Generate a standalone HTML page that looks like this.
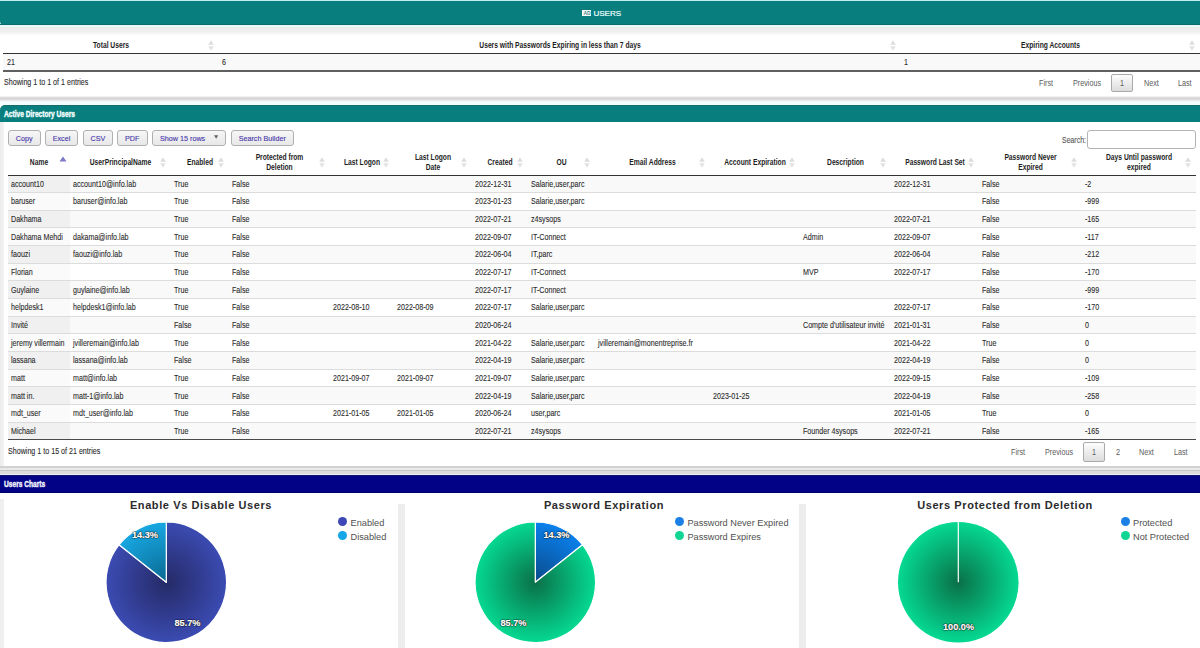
<!DOCTYPE html>
<html><head><meta charset="utf-8"><style>
*{box-sizing:border-box;margin:0;padding:0}
html,body{width:1200px;height:648px;overflow:hidden;background:#fff;font-family:"Liberation Sans",sans-serif;color:#333}
.a{position:absolute}
.t{position:absolute;white-space:nowrap;font-size:8.8px;line-height:10px;color:#2b2b2b;transform-origin:0 50%;transform:scaleX(0.81);-webkit-text-stroke:0.1px #2b2b2b}
.h{position:absolute;white-space:nowrap;font-size:9px;line-height:10px;font-weight:bold;color:#1e1e1e;text-align:center;transform-origin:50% 50%;transform:scaleX(0.745)}
.ic{position:absolute}
.btn{position:absolute;height:16px;border:1px solid #b0b0b0;border-radius:3px;background:linear-gradient(#f6f6f6,#e8e8e8)}
.bt{position:absolute;white-space:nowrap;font-size:8px;line-height:10px;color:#4536aa;-webkit-text-stroke:0.12px #4536aa;transform-origin:50% 50%;transform:scaleX(0.9)}
.pg{position:absolute;white-space:nowrap;font-size:9px;line-height:10px;color:#5a5a5a;transform-origin:0 50%;transform:scaleX(0.8)}
.ct{position:absolute;white-space:nowrap;font-size:11px;line-height:14px;font-weight:bold;color:#2b2b2b;text-align:center;letter-spacing:0.6px}
.lg{position:absolute;white-space:nowrap;font-size:9.2px;line-height:11px;color:#505050}
.dot{position:absolute;width:9px;height:9px;border-radius:50%}
.pl{position:absolute;white-space:nowrap;font-size:9.2px;line-height:11px;font-weight:bold;color:#fff;-webkit-text-stroke:0.2px #fff;text-shadow:0 0 1px #000,0 0 1.5px #000,0 0 1px #000;text-align:center}
</style></head><body>

<div class="a" style="left:0;top:0;width:1200px;height:1px;background:#bfeeee"></div>
<div class="a" style="left:0;top:1px;width:1200px;height:24px;background:#087f7e;border-radius:0 0 0 4px"></div>
<div class="a" style="left:0;top:23.8px;width:1200px;height:1.2px;background:#0b6b6b"></div>
<div class="a" style="left:0;top:25px;width:1200px;height:2px;background:#e6fbf9"></div>
<div class="a" style="left:582px;top:10px;width:9px;height:6px;background:#f4fbfb"></div>
<div class="a" style="left:583.5px;top:10.2px;font-size:5px;line-height:6px;color:#4a8f8f;font-weight:bold;white-space:nowrap">AD</div>
<div class="a" style="left:593.5px;top:8.7px;font-size:8px;line-height:10px;color:#f0ffff;-webkit-text-stroke:0.2px #f0ffff;white-space:nowrap">USERS</div>
<div class="a" style="left:0;top:27px;width:1200px;height:8px;background:linear-gradient(#eceeeb,#efeff1 55%,#fcfcfd)"></div>
<div class="h" style="left:3px;width:216px;top:40px">Total Users</div>
<svg class="ic" style="left:208.0px;top:39.5px" width="6" height="11" viewBox="0 0 6 11"><path d="M3 0.3 L5.8 4.8 L0.2 4.8Z" fill="#dcdcdc"/><path d="M3 10.7 L5.8 6.2 L0.2 6.2Z" fill="#e2e2e2"/></svg>
<div class="h" style="left:219px;width:682px;top:40px">Users with Passwords Expiring in less than 7 days</div>
<svg class="ic" style="left:890.0px;top:39.5px" width="6" height="11" viewBox="0 0 6 11"><path d="M3 0.3 L5.8 4.8 L0.2 4.8Z" fill="#dcdcdc"/><path d="M3 10.7 L5.8 6.2 L0.2 6.2Z" fill="#e2e2e2"/></svg>
<div class="h" style="left:901px;width:299px;top:40px">Expiring Accounts</div>
<svg class="ic" style="left:1189.0px;top:39.5px" width="6" height="11" viewBox="0 0 6 11"><path d="M3 0.3 L5.8 4.8 L0.2 4.8Z" fill="#dcdcdc"/><path d="M3 10.7 L5.8 6.2 L0.2 6.2Z" fill="#e2e2e2"/></svg>
<div class="a" style="left:3px;top:53px;width:1197px;height:1px;background:#333"></div>
<div class="a" style="left:3px;top:54px;width:1197px;height:16.5px;background:#f9f9f9"></div>
<div class="t" style="left:6.5px;top:57.4px">21</div>
<div class="t" style="left:221.5px;top:57.4px">6</div>
<div class="t" style="left:903.5px;top:57.4px">1</div>
<div class="a" style="left:3px;top:70.2px;width:1197px;height:1.6px;background:#5f5f5f"></div>
<div class="t" style="left:3.5px;top:77.4px">Showing 1 to 1 of 1 entries</div>
<div class="pg" style="left:1039.2px;top:78.2px">First</div>
<div class="pg" style="left:1073.2px;top:78.2px">Previous</div>
<div class="btn" style="left:1111px;top:73.6px;width:21.6px;height:18.8px;border-color:#aaa;border-radius:2px;background:linear-gradient(#fdfdfd,#dcdcdc)"></div>
<div class="pg" style="left:1120.2px;top:78.2px">1</div>
<div class="pg" style="left:1143.7px;top:78.2px">Next</div>
<div class="pg" style="left:1178.2px;top:78.2px">Last</div>
<div class="a" style="left:0;top:96px;width:1200px;height:5.5px;background:linear-gradient(#fafafa,#d3d3d3 35%,#dadada 55%,#fdfdfd)"></div>
<div class="a" style="left:0;top:101.5px;width:1200px;height:3.3px;background:#f2fcfc"></div>
<div class="a" style="left:0;top:104.8px;width:1200px;height:17.7px;background:#087f7e;border-top:1px solid #176d6d;border-radius:5px 0 0 0"></div>
<div class="a" style="left:4px;top:108.8px;font-size:9px;line-height:10px;font-weight:bold;color:#f4ffff;-webkit-text-stroke:0.4px #f4ffff;white-space:nowrap;transform-origin:0 50%;transform:scaleX(0.735)">Active Directory Users</div>
<div class="a" style="left:0;top:122px;width:3.5px;height:344px;background:linear-gradient(90deg,#ececec,#f4f4f4)"></div>
<div class="btn" style="left:8px;top:130.2px;width:32.5px;height:16.3px"></div>
<div class="bt" style="left:8px;width:32.5px;text-align:center;top:133.8px">Copy</div>
<div class="btn" style="left:45px;top:130.2px;width:33px;height:16.3px"></div>
<div class="bt" style="left:45px;width:33px;text-align:center;top:133.8px">Excel</div>
<div class="btn" style="left:83px;top:130.2px;width:30px;height:16.3px"></div>
<div class="bt" style="left:83px;width:30px;text-align:center;top:133.8px">CSV</div>
<div class="btn" style="left:117px;top:130.2px;width:30.5px;height:16.3px"></div>
<div class="bt" style="left:117px;width:30.5px;text-align:center;top:133.8px">PDF</div>
<div class="btn" style="left:152.3px;top:130.2px;width:74.1px;height:16.3px"></div>
<div class="bt" style="left:159.7px;top:133.8px;transform-origin:0 50%">Show 15 rows</div>
<svg class="ic" style="left:213.7px;top:134.8px" width="4.4" height="4" viewBox="0 0 4.4 4"><path d="M0 0.2 L4.4 0.2 L2.2 3.8Z" fill="#666"/></svg>
<div class="btn" style="left:231px;top:130.2px;width:62.5px;height:16.3px"></div>
<div class="bt" style="left:231px;width:62.5px;text-align:center;top:133.8px">Search Builder</div>
<div class="t" style="left:1061.5px;top:135.1px;color:#555;-webkit-text-stroke:0.1px #555;transform:scaleX(0.79)">Search:</div>
<div class="a" style="left:1087.3px;top:130.2px;width:108.5px;height:18.4px;border:1px solid #b4b4b4;border-radius:3px;background:#fff"></div>
<div class="h" style="left:8px;width:62px;top:157px">Name</div>
<svg class="ic" style="left:58.5px;top:155.5px" width="8" height="6" viewBox="0 0 8 6"><path d="M4 0.5 L7.5 5.5 L0.5 5.5Z" fill="#7d78c8"/></svg>
<div class="h" style="left:70px;width:101px;top:157px">UserPrincipalName</div>
<svg class="ic" style="left:160.0px;top:156.5px" width="6" height="11" viewBox="0 0 6 11"><path d="M3 0.3 L5.8 4.8 L0.2 4.8Z" fill="#dcdcdc"/><path d="M3 10.7 L5.8 6.2 L0.2 6.2Z" fill="#e2e2e2"/></svg>
<div class="h" style="left:171px;width:58px;top:157px">Enabled</div>
<svg class="ic" style="left:218.0px;top:156.5px" width="6" height="11" viewBox="0 0 6 11"><path d="M3 0.3 L5.8 4.8 L0.2 4.8Z" fill="#dcdcdc"/><path d="M3 10.7 L5.8 6.2 L0.2 6.2Z" fill="#e2e2e2"/></svg>
<div class="h" style="left:229px;width:101px;top:151.8px">Protected from</div>
<div class="h" style="left:229px;width:101px;top:161.8px">Deletion</div>
<svg class="ic" style="left:319.0px;top:156.5px" width="6" height="11" viewBox="0 0 6 11"><path d="M3 0.3 L5.8 4.8 L0.2 4.8Z" fill="#dcdcdc"/><path d="M3 10.7 L5.8 6.2 L0.2 6.2Z" fill="#e2e2e2"/></svg>
<div class="h" style="left:330px;width:64px;top:157px">Last Logon</div>
<svg class="ic" style="left:383.0px;top:156.5px" width="6" height="11" viewBox="0 0 6 11"><path d="M3 0.3 L5.8 4.8 L0.2 4.8Z" fill="#dcdcdc"/><path d="M3 10.7 L5.8 6.2 L0.2 6.2Z" fill="#e2e2e2"/></svg>
<div class="h" style="left:394px;width:78px;top:151.8px">Last Logon</div>
<div class="h" style="left:394px;width:78px;top:161.8px">Date</div>
<svg class="ic" style="left:461.0px;top:156.5px" width="6" height="11" viewBox="0 0 6 11"><path d="M3 0.3 L5.8 4.8 L0.2 4.8Z" fill="#dcdcdc"/><path d="M3 10.7 L5.8 6.2 L0.2 6.2Z" fill="#e2e2e2"/></svg>
<div class="h" style="left:472px;width:56px;top:157px">Created</div>
<svg class="ic" style="left:517.0px;top:156.5px" width="6" height="11" viewBox="0 0 6 11"><path d="M3 0.3 L5.8 4.8 L0.2 4.8Z" fill="#dcdcdc"/><path d="M3 10.7 L5.8 6.2 L0.2 6.2Z" fill="#e2e2e2"/></svg>
<div class="h" style="left:528px;width:67px;top:157px">OU</div>
<svg class="ic" style="left:584.0px;top:156.5px" width="6" height="11" viewBox="0 0 6 11"><path d="M3 0.3 L5.8 4.8 L0.2 4.8Z" fill="#dcdcdc"/><path d="M3 10.7 L5.8 6.2 L0.2 6.2Z" fill="#e2e2e2"/></svg>
<div class="h" style="left:595px;width:115px;top:157px">Email Address</div>
<svg class="ic" style="left:699.0px;top:156.5px" width="6" height="11" viewBox="0 0 6 11"><path d="M3 0.3 L5.8 4.8 L0.2 4.8Z" fill="#dcdcdc"/><path d="M3 10.7 L5.8 6.2 L0.2 6.2Z" fill="#e2e2e2"/></svg>
<div class="h" style="left:710px;width:90px;top:157px">Account Expiration</div>
<svg class="ic" style="left:789.0px;top:156.5px" width="6" height="11" viewBox="0 0 6 11"><path d="M3 0.3 L5.8 4.8 L0.2 4.8Z" fill="#dcdcdc"/><path d="M3 10.7 L5.8 6.2 L0.2 6.2Z" fill="#e2e2e2"/></svg>
<div class="h" style="left:800px;width:91px;top:157px">Description</div>
<svg class="ic" style="left:880.0px;top:156.5px" width="6" height="11" viewBox="0 0 6 11"><path d="M3 0.3 L5.8 4.8 L0.2 4.8Z" fill="#dcdcdc"/><path d="M3 10.7 L5.8 6.2 L0.2 6.2Z" fill="#e2e2e2"/></svg>
<div class="h" style="left:891px;width:88px;top:157px">Password Last Set</div>
<svg class="ic" style="left:968.0px;top:156.5px" width="6" height="11" viewBox="0 0 6 11"><path d="M3 0.3 L5.8 4.8 L0.2 4.8Z" fill="#dcdcdc"/><path d="M3 10.7 L5.8 6.2 L0.2 6.2Z" fill="#e2e2e2"/></svg>
<div class="h" style="left:979px;width:103px;top:151.8px">Password Never</div>
<div class="h" style="left:979px;width:103px;top:161.8px">Expired</div>
<svg class="ic" style="left:1071.0px;top:156.5px" width="6" height="11" viewBox="0 0 6 11"><path d="M3 0.3 L5.8 4.8 L0.2 4.8Z" fill="#dcdcdc"/><path d="M3 10.7 L5.8 6.2 L0.2 6.2Z" fill="#e2e2e2"/></svg>
<div class="h" style="left:1082px;width:114px;top:151.8px">Days Until password</div>
<div class="h" style="left:1082px;width:114px;top:161.8px">expired</div>
<svg class="ic" style="left:1185.0px;top:156.5px" width="6" height="11" viewBox="0 0 6 11"><path d="M3 0.3 L5.8 4.8 L0.2 4.8Z" fill="#dcdcdc"/><path d="M3 10.7 L5.8 6.2 L0.2 6.2Z" fill="#e2e2e2"/></svg>
<div class="a" style="left:8px;top:174.8px;width:1188px;height:1.2px;background:#333"></div>
<div class="a" style="left:8px;top:175.80px;width:1188px;height:16.70px;background:#f9f9f9"></div>
<div class="a" style="left:8px;top:175.80px;width:62px;height:16.70px;background:#f0f0f0"></div>
<div class="t" style="left:11px;top:179.20px">account10</div>
<div class="t" style="left:73px;top:179.20px">account10@info.lab</div>
<div class="t" style="left:174px;top:179.20px">True</div>
<div class="t" style="left:232px;top:179.20px">False</div>
<div class="t" style="left:475px;top:179.20px">2022-12-31</div>
<div class="t" style="left:531px;top:179.20px">Salarie,user,parc</div>
<div class="t" style="left:894px;top:179.20px">2022-12-31</div>
<div class="t" style="left:982px;top:179.20px">False</div>
<div class="t" style="left:1085px;top:179.20px">-2</div>
<div class="a" style="left:8px;top:192.50px;width:1188px;height:17.66px;background:#ffffff"></div>
<div class="a" style="left:8px;top:192.50px;width:62px;height:17.66px;background:#fafafa"></div>
<div class="a" style="left:8px;top:192.00px;width:1188px;height:1px;background:#dcdcdc"></div>
<div class="t" style="left:11px;top:196.38px">baruser</div>
<div class="t" style="left:73px;top:196.38px">baruser@info.lab</div>
<div class="t" style="left:174px;top:196.38px">True</div>
<div class="t" style="left:232px;top:196.38px">False</div>
<div class="t" style="left:475px;top:196.38px">2023-01-23</div>
<div class="t" style="left:531px;top:196.38px">Salarie,user,parc</div>
<div class="t" style="left:982px;top:196.38px">False</div>
<div class="t" style="left:1085px;top:196.38px">-999</div>
<div class="a" style="left:8px;top:210.16px;width:1188px;height:17.66px;background:#f9f9f9"></div>
<div class="a" style="left:8px;top:210.16px;width:62px;height:17.66px;background:#f0f0f0"></div>
<div class="a" style="left:8px;top:209.66px;width:1188px;height:1px;background:#dcdcdc"></div>
<div class="t" style="left:11px;top:214.04px">Dakhama</div>
<div class="t" style="left:174px;top:214.04px">True</div>
<div class="t" style="left:232px;top:214.04px">False</div>
<div class="t" style="left:475px;top:214.04px">2022-07-21</div>
<div class="t" style="left:531px;top:214.04px">z4sysops</div>
<div class="t" style="left:894px;top:214.04px">2022-07-21</div>
<div class="t" style="left:982px;top:214.04px">False</div>
<div class="t" style="left:1085px;top:214.04px">-165</div>
<div class="a" style="left:8px;top:227.82px;width:1188px;height:17.66px;background:#ffffff"></div>
<div class="a" style="left:8px;top:227.82px;width:62px;height:17.66px;background:#fafafa"></div>
<div class="a" style="left:8px;top:227.32px;width:1188px;height:1px;background:#dcdcdc"></div>
<div class="t" style="left:11px;top:231.70px">Dakhama Mehdi</div>
<div class="t" style="left:73px;top:231.70px">dakama@info.lab</div>
<div class="t" style="left:174px;top:231.70px">True</div>
<div class="t" style="left:232px;top:231.70px">False</div>
<div class="t" style="left:475px;top:231.70px">2022-09-07</div>
<div class="t" style="left:531px;top:231.70px">IT-Connect</div>
<div class="t" style="left:803px;top:231.70px">Admin</div>
<div class="t" style="left:894px;top:231.70px">2022-09-07</div>
<div class="t" style="left:982px;top:231.70px">False</div>
<div class="t" style="left:1085px;top:231.70px">-117</div>
<div class="a" style="left:8px;top:245.48px;width:1188px;height:17.66px;background:#f9f9f9"></div>
<div class="a" style="left:8px;top:245.48px;width:62px;height:17.66px;background:#f0f0f0"></div>
<div class="a" style="left:8px;top:244.98px;width:1188px;height:1px;background:#dcdcdc"></div>
<div class="t" style="left:11px;top:249.36px">faouzi</div>
<div class="t" style="left:73px;top:249.36px">faouzi@info.lab</div>
<div class="t" style="left:174px;top:249.36px">True</div>
<div class="t" style="left:232px;top:249.36px">False</div>
<div class="t" style="left:475px;top:249.36px">2022-06-04</div>
<div class="t" style="left:531px;top:249.36px">IT,parc</div>
<div class="t" style="left:894px;top:249.36px">2022-06-04</div>
<div class="t" style="left:982px;top:249.36px">False</div>
<div class="t" style="left:1085px;top:249.36px">-212</div>
<div class="a" style="left:8px;top:263.14px;width:1188px;height:17.66px;background:#ffffff"></div>
<div class="a" style="left:8px;top:263.14px;width:62px;height:17.66px;background:#fafafa"></div>
<div class="a" style="left:8px;top:262.64px;width:1188px;height:1px;background:#dcdcdc"></div>
<div class="t" style="left:11px;top:267.02px">Florian</div>
<div class="t" style="left:174px;top:267.02px">True</div>
<div class="t" style="left:232px;top:267.02px">False</div>
<div class="t" style="left:475px;top:267.02px">2022-07-17</div>
<div class="t" style="left:531px;top:267.02px">IT-Connect</div>
<div class="t" style="left:803px;top:267.02px">MVP</div>
<div class="t" style="left:894px;top:267.02px">2022-07-17</div>
<div class="t" style="left:982px;top:267.02px">False</div>
<div class="t" style="left:1085px;top:267.02px">-170</div>
<div class="a" style="left:8px;top:280.80px;width:1188px;height:17.66px;background:#f9f9f9"></div>
<div class="a" style="left:8px;top:280.80px;width:62px;height:17.66px;background:#f0f0f0"></div>
<div class="a" style="left:8px;top:280.30px;width:1188px;height:1px;background:#dcdcdc"></div>
<div class="t" style="left:11px;top:284.68px">Guylaine</div>
<div class="t" style="left:73px;top:284.68px">guylaine@info.lab</div>
<div class="t" style="left:174px;top:284.68px">True</div>
<div class="t" style="left:232px;top:284.68px">False</div>
<div class="t" style="left:475px;top:284.68px">2022-07-17</div>
<div class="t" style="left:531px;top:284.68px">IT-Connect</div>
<div class="t" style="left:982px;top:284.68px">False</div>
<div class="t" style="left:1085px;top:284.68px">-999</div>
<div class="a" style="left:8px;top:298.46px;width:1188px;height:17.66px;background:#ffffff"></div>
<div class="a" style="left:8px;top:298.46px;width:62px;height:17.66px;background:#fafafa"></div>
<div class="a" style="left:8px;top:297.96px;width:1188px;height:1px;background:#dcdcdc"></div>
<div class="t" style="left:11px;top:302.34px">helpdesk1</div>
<div class="t" style="left:73px;top:302.34px">helpdesk1@info.lab</div>
<div class="t" style="left:174px;top:302.34px">True</div>
<div class="t" style="left:232px;top:302.34px">False</div>
<div class="t" style="left:333px;top:302.34px">2022-08-10</div>
<div class="t" style="left:397px;top:302.34px">2022-08-09</div>
<div class="t" style="left:475px;top:302.34px">2022-07-17</div>
<div class="t" style="left:531px;top:302.34px">Salarie,user,parc</div>
<div class="t" style="left:894px;top:302.34px">2022-07-17</div>
<div class="t" style="left:982px;top:302.34px">False</div>
<div class="t" style="left:1085px;top:302.34px">-170</div>
<div class="a" style="left:8px;top:316.12px;width:1188px;height:17.66px;background:#f9f9f9"></div>
<div class="a" style="left:8px;top:316.12px;width:62px;height:17.66px;background:#f0f0f0"></div>
<div class="a" style="left:8px;top:315.62px;width:1188px;height:1px;background:#dcdcdc"></div>
<div class="t" style="left:11px;top:320.00px">Invité</div>
<div class="t" style="left:174px;top:320.00px">False</div>
<div class="t" style="left:232px;top:320.00px">False</div>
<div class="t" style="left:475px;top:320.00px">2020-06-24</div>
<div class="t" style="left:803px;top:320.00px">Compte d&#39;utilisateur invité</div>
<div class="t" style="left:894px;top:320.00px">2021-01-31</div>
<div class="t" style="left:982px;top:320.00px">False</div>
<div class="t" style="left:1085px;top:320.00px">0</div>
<div class="a" style="left:8px;top:333.78px;width:1188px;height:17.66px;background:#ffffff"></div>
<div class="a" style="left:8px;top:333.78px;width:62px;height:17.66px;background:#fafafa"></div>
<div class="a" style="left:8px;top:333.28px;width:1188px;height:1px;background:#dcdcdc"></div>
<div class="t" style="left:11px;top:337.66px">jeremy villermain</div>
<div class="t" style="left:73px;top:337.66px">jvilleremain@info.lab</div>
<div class="t" style="left:174px;top:337.66px">True</div>
<div class="t" style="left:232px;top:337.66px">False</div>
<div class="t" style="left:475px;top:337.66px">2021-04-22</div>
<div class="t" style="left:531px;top:337.66px">Salarie,user,parc</div>
<div class="t" style="left:598px;top:337.66px">jvilleremain@monentreprise.fr</div>
<div class="t" style="left:894px;top:337.66px">2021-04-22</div>
<div class="t" style="left:982px;top:337.66px">True</div>
<div class="t" style="left:1085px;top:337.66px">0</div>
<div class="a" style="left:8px;top:351.44px;width:1188px;height:17.66px;background:#f9f9f9"></div>
<div class="a" style="left:8px;top:351.44px;width:62px;height:17.66px;background:#f0f0f0"></div>
<div class="a" style="left:8px;top:350.94px;width:1188px;height:1px;background:#dcdcdc"></div>
<div class="t" style="left:11px;top:355.32px">lassana</div>
<div class="t" style="left:73px;top:355.32px">lassana@info.lab</div>
<div class="t" style="left:174px;top:355.32px">False</div>
<div class="t" style="left:232px;top:355.32px">False</div>
<div class="t" style="left:475px;top:355.32px">2022-04-19</div>
<div class="t" style="left:531px;top:355.32px">Salarie,user,parc</div>
<div class="t" style="left:894px;top:355.32px">2022-04-19</div>
<div class="t" style="left:982px;top:355.32px">False</div>
<div class="t" style="left:1085px;top:355.32px">0</div>
<div class="a" style="left:8px;top:369.10px;width:1188px;height:17.66px;background:#ffffff"></div>
<div class="a" style="left:8px;top:369.10px;width:62px;height:17.66px;background:#fafafa"></div>
<div class="a" style="left:8px;top:368.60px;width:1188px;height:1px;background:#dcdcdc"></div>
<div class="t" style="left:11px;top:372.98px">matt</div>
<div class="t" style="left:73px;top:372.98px">matt@info.lab</div>
<div class="t" style="left:174px;top:372.98px">True</div>
<div class="t" style="left:232px;top:372.98px">False</div>
<div class="t" style="left:333px;top:372.98px">2021-09-07</div>
<div class="t" style="left:397px;top:372.98px">2021-09-07</div>
<div class="t" style="left:475px;top:372.98px">2021-09-07</div>
<div class="t" style="left:531px;top:372.98px">Salarie,user,parc</div>
<div class="t" style="left:894px;top:372.98px">2022-09-15</div>
<div class="t" style="left:982px;top:372.98px">False</div>
<div class="t" style="left:1085px;top:372.98px">-109</div>
<div class="a" style="left:8px;top:386.76px;width:1188px;height:17.66px;background:#f9f9f9"></div>
<div class="a" style="left:8px;top:386.76px;width:62px;height:17.66px;background:#f0f0f0"></div>
<div class="a" style="left:8px;top:386.26px;width:1188px;height:1px;background:#dcdcdc"></div>
<div class="t" style="left:11px;top:390.64px">matt in.</div>
<div class="t" style="left:73px;top:390.64px">matt-1@info.lab</div>
<div class="t" style="left:174px;top:390.64px">True</div>
<div class="t" style="left:232px;top:390.64px">False</div>
<div class="t" style="left:475px;top:390.64px">2022-04-19</div>
<div class="t" style="left:531px;top:390.64px">Salarie,user,parc</div>
<div class="t" style="left:713px;top:390.64px">2023-01-25</div>
<div class="t" style="left:894px;top:390.64px">2022-04-19</div>
<div class="t" style="left:982px;top:390.64px">False</div>
<div class="t" style="left:1085px;top:390.64px">-258</div>
<div class="a" style="left:8px;top:404.42px;width:1188px;height:17.66px;background:#ffffff"></div>
<div class="a" style="left:8px;top:404.42px;width:62px;height:17.66px;background:#fafafa"></div>
<div class="a" style="left:8px;top:403.92px;width:1188px;height:1px;background:#dcdcdc"></div>
<div class="t" style="left:11px;top:408.30px">mdt_user</div>
<div class="t" style="left:73px;top:408.30px">mdt_user@info.lab</div>
<div class="t" style="left:174px;top:408.30px">True</div>
<div class="t" style="left:232px;top:408.30px">False</div>
<div class="t" style="left:333px;top:408.30px">2021-01-05</div>
<div class="t" style="left:397px;top:408.30px">2021-01-05</div>
<div class="t" style="left:475px;top:408.30px">2020-06-24</div>
<div class="t" style="left:531px;top:408.30px">user,parc</div>
<div class="t" style="left:894px;top:408.30px">2021-01-05</div>
<div class="t" style="left:982px;top:408.30px">True</div>
<div class="t" style="left:1085px;top:408.30px">0</div>
<div class="a" style="left:8px;top:422.08px;width:1188px;height:17.66px;background:#f9f9f9"></div>
<div class="a" style="left:8px;top:422.08px;width:62px;height:17.66px;background:#f0f0f0"></div>
<div class="a" style="left:8px;top:421.58px;width:1188px;height:1px;background:#dcdcdc"></div>
<div class="t" style="left:11px;top:425.96px">Michael</div>
<div class="t" style="left:174px;top:425.96px">True</div>
<div class="t" style="left:232px;top:425.96px">False</div>
<div class="t" style="left:475px;top:425.96px">2022-07-21</div>
<div class="t" style="left:531px;top:425.96px">z4sysops</div>
<div class="t" style="left:803px;top:425.96px">Founder 4sysops</div>
<div class="t" style="left:894px;top:425.96px">2022-07-21</div>
<div class="t" style="left:982px;top:425.96px">False</div>
<div class="t" style="left:1085px;top:425.96px">-165</div>
<div class="a" style="left:8px;top:439.14px;width:1188px;height:1.2px;background:#4a4a4a"></div>
<div class="t" style="left:8px;top:446px">Showing 1 to 15 of 21 entries</div>
<div class="pg" style="left:1011px;top:446.5px">First</div>
<div class="pg" style="left:1045px;top:446.5px">Previous</div>
<div class="btn" style="left:1083px;top:442.2px;width:21.6px;height:19.6px;border-color:#aaa;border-radius:2px;background:linear-gradient(#fdfdfd,#dcdcdc)"></div>
<div class="pg" style="left:1091.5px;top:446.5px">1</div>
<div class="pg" style="left:1115.5px;top:446.5px">2</div>
<div class="pg" style="left:1138.9px;top:446.5px">Next</div>
<div class="pg" style="left:1173.5px;top:446.5px">Last</div>
<div class="a" style="left:0;top:466px;width:1200px;height:2px;background:#d2d2d2"></div>
<div class="a" style="left:0;top:468px;width:1200px;height:2px;background:#e9e9e9"></div>
<div class="a" style="left:0;top:470px;width:1200px;height:1px;background:#c6c6c6"></div>
<div class="a" style="left:0;top:471px;width:1200px;height:3px;background:#dcdcdc"></div>
<div class="a" style="left:0;top:474px;width:1200px;height:1.2px;background:#ececfc"></div>
<div class="a" style="left:0;top:475.2px;width:1200px;height:17.4px;background:#020287;border-top:1px solid #14146a;border-bottom:1px solid #00006a"></div>
<div class="a" style="left:4px;top:478.9px;font-size:9px;line-height:10px;font-weight:bold;color:#f4f4ff;-webkit-text-stroke:0.4px #f4f4ff;white-space:nowrap;transform-origin:0 50%;transform:scaleX(0.735)">Users Charts</div>
<div class="a" style="left:0;top:499px;width:4px;height:149px;background:#efefef"></div>
<div class="a" style="left:398px;top:503.8px;width:7px;height:145px;background:#ededed"></div>
<div class="a" style="left:798.5px;top:504.2px;width:7px;height:144px;background:#ededed"></div>
<svg class="a" style="left:104.10000000000001px;top:520.0px" width="124.6" height="124.6" viewBox="-62.3 -62.3 124.6 124.6"><defs><radialGradient id="p10" cx="0" cy="0" r="60.3" gradientUnits="userSpaceOnUse"><stop offset="0" stop-color="#252a66"/><stop offset="1" stop-color="#3b4bb2"/></radialGradient><radialGradient id="p11" cx="0" cy="0" r="60.3" gradientUnits="userSpaceOnUse"><stop offset="0" stop-color="#0a6990"/><stop offset="1" stop-color="#17a7e2"/></radialGradient></defs><path d="M0 0 L0.00 -60.30 A60.3 60.3 0 1 1 -47.18 -37.55Z" fill="url(#p10)" stroke="#fff" stroke-width="1.2" stroke-linejoin="round"/><path d="M0 0 L-47.18 -37.55 A60.3 60.3 0 0 1 -0.00 -60.30Z" fill="url(#p11)" stroke="#fff" stroke-width="1.2" stroke-linejoin="round"/></svg>
<svg class="a" style="left:473.2px;top:520.2px" width="124.6" height="124.6" viewBox="-62.3 -62.3 124.6 124.6"><defs><radialGradient id="p20" cx="0" cy="0" r="60.3" gradientUnits="userSpaceOnUse"><stop offset="0" stop-color="#0a4a8a"/><stop offset="1" stop-color="#0a80ec"/></radialGradient><radialGradient id="p21" cx="0" cy="0" r="60.3" gradientUnits="userSpaceOnUse"><stop offset="0" stop-color="#0a7049"/><stop offset="1" stop-color="#05d992"/></radialGradient></defs><path d="M0 0 L0.00 -60.30 A60.3 60.3 0 0 1 47.18 -37.55Z" fill="url(#p20)" stroke="#fff" stroke-width="1.2" stroke-linejoin="round"/><path d="M0 0 L47.18 -37.55 A60.3 60.3 0 1 1 -0.00 -60.30Z" fill="url(#p21)" stroke="#fff" stroke-width="1.2" stroke-linejoin="round"/></svg>
<svg class="a" style="left:896.2px;top:520.2px" width="124.6" height="124.6" viewBox="-62.3 -62.3 124.6 124.6"><defs><radialGradient id="p30" cx="0" cy="0" r="60.3" gradientUnits="userSpaceOnUse"><stop offset="0" stop-color="#0a7049"/><stop offset="1" stop-color="#05d992"/></radialGradient></defs><circle cx="0" cy="0" r="60.3" fill="url(#p30)"/><line x1="0" y1="0" x2="0" y2="-60.3" stroke="#fff" stroke-width="1.2"/></svg>
<div class="ct" style="left:4px;width:394px;top:498.2px">Enable Vs Disable Users</div>
<div class="ct" style="left:405px;width:398px;top:498.2px">Password Expiration</div>
<div class="ct" style="left:806px;width:398px;top:498.2px">Users Protected from Deletion</div>
<div class="dot" style="left:338.29999999999995px;top:516.8px;background:#3d48b6"></div>
<div class="lg" style="left:350.59999999999997px;top:517.6999999999999px">Enabled</div>
<div class="dot" style="left:338.29999999999995px;top:531.3px;background:#14a6e6"></div>
<div class="lg" style="left:350.59999999999997px;top:532.1999999999999px">Disabled</div>
<div class="dot" style="left:675.1px;top:516.8px;background:#1a80e6"></div>
<div class="lg" style="left:687.4000000000001px;top:517.6999999999999px">Password Never Expired</div>
<div class="dot" style="left:675.1px;top:531.3px;background:#12d494"></div>
<div class="lg" style="left:687.4000000000001px;top:532.1999999999999px">Password Expires</div>
<div class="dot" style="left:1120.7px;top:516.8px;background:#1a80e6"></div>
<div class="lg" style="left:1133.0px;top:517.6999999999999px">Protected</div>
<div class="dot" style="left:1120.7px;top:531.3px;background:#12d494"></div>
<div class="lg" style="left:1133.0px;top:532.1999999999999px">Not Protected</div>
<div class="pl" style="left:125px;width:40px;top:529.5px">14.3%</div>
<div class="pl" style="left:167.5px;width:40px;top:617.5px">85.7%</div>
<div class="pl" style="left:536.5px;width:40px;top:529.5px">14.3%</div>
<div class="pl" style="left:493.5px;width:40px;top:617.5px">85.7%</div>
<div class="pl" style="left:938.5px;width:40px;top:622px">100.0%</div>
</body></html>
